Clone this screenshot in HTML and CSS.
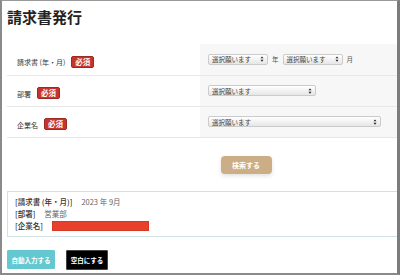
FILE: index.html
```html
<!DOCTYPE html>
<html lang="ja">
<head>
    <meta charset="UTF-8">
    <meta name="viewport" content="width=device-width, initial-scale=1.0">
    <title>請求書発行</title>
    <link rel="stylesheet" href="styles.css">
</head>
<body>
    <div class="frame">
        <div class="page">
            <h1 class="title">請求書発行</h1>
            <div class="main">
                <table class="form-table">
                    <tr>
                        <th><span class="label">請求書 (年・月)</span><span class="badge">必須</span></th>
                        <td>
                            <div class="field">
                                <div class="select w-short"><span>選択願います</span><svg class="arrow" viewBox="0 0 5 8"><path d="M2.5 0.5 L4.5 3 L0.5 3 Z M0.5 5 L4.5 5 L2.5 7.5 Z"/></svg></div>
                                <span class="unit">年</span>
                                <div class="select w-short"><span>選択願います</span><svg class="arrow" viewBox="0 0 5 8"><path d="M2.5 0.5 L4.5 3 L0.5 3 Z M0.5 5 L4.5 5 L2.5 7.5 Z"/></svg></div>
                                <span class="unit">月</span>
                            </div>
                        </td>
                    </tr>
                    <tr>
                        <th><span class="label">部署</span><span class="badge">必須</span></th>
                        <td>
                            <div class="field">
                                <div class="select w-mid"><span>選択願います</span><svg class="arrow" viewBox="0 0 5 8"><path d="M2.5 0.5 L4.5 3 L0.5 3 Z M0.5 5 L4.5 5 L2.5 7.5 Z"/></svg></div>
                            </div>
                        </td>
                    </tr>
                    <tr>
                        <th><span class="label">企業名</span><span class="badge">必須</span></th>
                        <td>
                            <div class="field">
                                <div class="select w-long"><span>選択願います</span><svg class="arrow" viewBox="0 0 5 8"><path d="M2.5 0.5 L4.5 3 L0.5 3 Z M0.5 5 L4.5 5 L2.5 7.5 Z"/></svg></div>
                            </div>
                        </td>
                    </tr>
                </table>

                <div class="search-row">
                    <button class="btn-search">検索する</button>
                </div>

                <div class="result">
                    <div class="result-line"><span class="result-key">[請求書 (年・月)]</span><span class="result-val">2023 年 9月</span></div>
                    <div class="result-line"><span class="result-key">[部署]</span><span class="result-val">営業部</span></div>
                    <div class="result-line"><span class="result-key">[企業名]</span><span class="redacted"></span></div>
                </div>
            </div>

            <div class="actions">
                <button class="btn btn-auto">自動入力する</button>
                <button class="btn btn-clear">空白にする</button>
            </div>
        </div>
    </div>
</body>
</html>
```

FILE: styles.css
```css
* {
    box-sizing: border-box;
}
body {
    margin: 0;
    font-family: "Noto Sans CJK JP", "Noto Sans", sans-serif;
    color: #333;
    background-color: #fff;
}
.frame {
    width: 400px;
    height: 275px;
    overflow: hidden;
    border-top: 1px solid #999;
    border-left: 2px solid #8a8a8a;
    border-right: 3px solid #7c7c7c;
    border-bottom: 2px solid #8a8a8a;
}
.page {
    width: 500px;
    padding-left: 5px;
}
.title {
    margin: 0;
    padding-top: 6px;
    font-size: 15px;
    line-height: 20px;
    font-weight: 700;
    color: #222;
}
.main {
    width: 478px;
}
.form-table {
    width: 100%;
    margin-top: 17px;
    border-collapse: collapse;
}
.form-table th,
.form-table td {
    height: 31px;
    padding: 0;
    border-bottom: 1px solid #e8e8e8;
    vertical-align: middle;
}
.form-table th {
    width: 193px;
    padding-left: 10px;
    text-align: left;
    font-weight: 400;
    background-color: #fff;
}
.form-table td {
    padding-left: 8px;
    background-color: #f7f7f7;
}
.label {
    font-size: 7px;
    color: #333;
    vertical-align: middle;
}
.badge {
    display: inline-block;
    margin-left: 6px;
    height: 12px;
    padding: 0 3px;
    line-height: 10px;
    font-size: 7.5px;
    font-weight: 700;
    color: #fff;
    background-color: #c4352d;
    border: 1px solid #a02822;
    border-radius: 2px;
    vertical-align: middle;
}
.field {
    display: flex;
    align-items: center;
    gap: 3px;
}
.select {
    display: flex;
    align-items: center;
    justify-content: space-between;
    height: 11px;
    padding: 0 3px 0 3px;
    font-size: 6.5px;
    color: #444;
    background: linear-gradient(#ffffff, #e6e6e6);
    border: 1px solid #cbcbcb;
    border-radius: 2px;
}
.w-short {
    width: 60px;
}
.w-mid {
    width: 108px;
}
.w-long {
    width: 173px;
}
.arrow {
    width: 4px;
    height: 6px;
    fill: #222;
}
.unit {
    font-size: 6.5px;
    color: #555;
    margin: 0 1px;
}
.search-row {
    display: flex;
    justify-content: center;
    margin-top: 18px;
}
.btn-search {
    width: 51px;
    height: 18px;
    padding: 0;
    font-family: inherit;
    font-size: 7px;
    font-weight: 700;
    color: #fff;
    background-color: #cbae86;
    border: none;
    border-radius: 4px;
    box-shadow: 0 2px 4px rgba(0, 0, 0, 0.12);
}
.result {
    margin-top: 17px;
    padding: 4px 7px;
    border: 1px solid #cfe2e6;
}
.result-line {
    display: flex;
    align-items: center;
    height: 12px;
    font-size: 7.5px;
}
.result-key {
    color: #333;
    font-weight: 500;
    margin-right: 9px;
}
.result-val {
    color: #666;
}
.redacted {
    display: inline-block;
    width: 97px;
    height: 10px;
    background-color: #e8412b;
    border: 1px solid #d43a26;
}
.actions {
    display: flex;
    align-items: center;
    gap: 11px;
    margin-top: 13px;
}
.btn {
    height: 19px;
    padding: 0;
    font-family: inherit;
    font-size: 6.5px;
    font-weight: 700;
    color: #fff;
    border-radius: 1px;
}
.btn-auto {
    width: 48px;
    background-color: #63c8cf;
    border: 1px solid #63c8cf;
}
.btn-clear {
    width: 42px;
    height: 20px;
    background-color: #000;
    border: 1px solid #444;
}
```
